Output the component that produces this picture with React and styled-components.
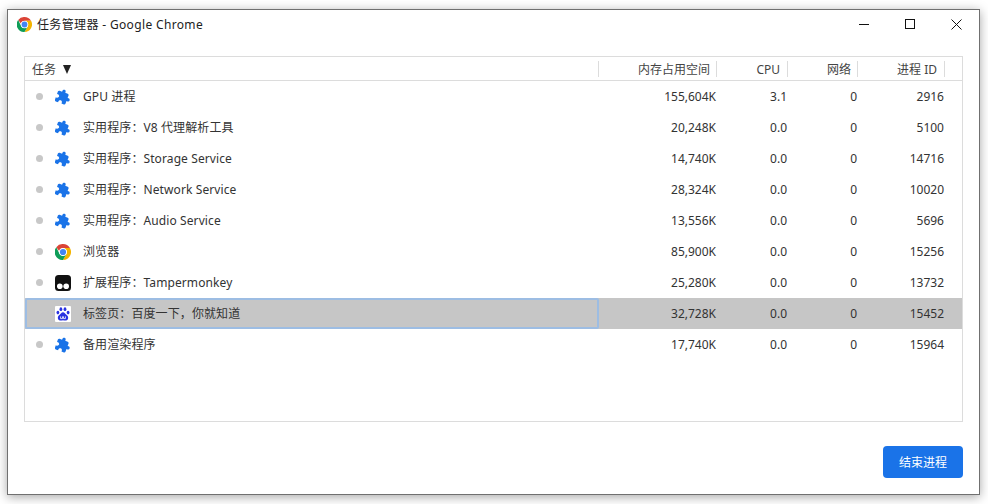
import styled, { createGlobalStyle } from 'styled-components';

const GlobalStyle = createGlobalStyle`
  html, body {
    margin: 0;
    padding: 0;
    background: #fff;
    overflow: hidden;
  }
`;

const Page = styled.div`
  width: 988px;
  height: 504px;
  box-sizing: border-box;
  padding: 9px 8px 9px 7px;
  font-family: "Noto Sans", "Noto Sans CJK SC", sans-serif;
  font-size: 12px;
  color: #333;
`;

const Window = styled.div`
  height: 100%;
  box-sizing: border-box;
  display: flex;
  flex-direction: column;
  background: #fff;
  border: 1px solid #707070;
  box-shadow: 0 2px 10px rgba(0, 0, 0, 0.35);
`;

const TitleBar = styled.div`
  height: 28px;
  display: flex;
  align-items: center;
  padding: 0 0 0 9px;
`;

const TitleText = styled.span`
  margin-left: 5px;
  flex: 1;
  font-size: 12px;
  letter-spacing: 0.35px;
  color: #222;
  white-space: nowrap;
`;

const WinButton = styled.button`
  width: 46px;
  height: 28px;
  padding: 0;
  border: 0;
  background: none;
  display: flex;
  align-items: center;
  justify-content: center;
`;

const TableBox = styled.div`
  margin: 18px 16px 0 16px;
  height: 366px;
  box-sizing: border-box;
  border: 1px solid #dcdcdc;
`;

const HeaderRow = styled.div`
  display: grid;
  grid-template-columns: 574px 118px 71px 70px 87px 18px;
  height: 24px;
  box-sizing: border-box;
  border-bottom: 1px solid #dcdcdc;
  align-items: center;
`;

const HeaderCell = styled.div`
  box-sizing: border-box;
  height: 16px;
  line-height: 16px;
  white-space: nowrap;
  color: #444;
  text-align: ${({ $left }) => ($left ? 'left' : 'right')};
  padding: ${({ $left, $cjk }) => ($left ? '1px 0 0 7px' : $cjk ? '1px 6px 0 0' : '1px 7px 0 0')};
  border-right: 1px solid #dcdcdc;
`;

const SortArrow = styled.span`
  display: inline-block;
  margin-left: 7px;
  width: 0;
  height: 0;
  border-left: 4.5px solid transparent;
  border-right: 4.5px solid transparent;
  border-top: 9px solid #222;
`;

const Row = styled.div`
  display: grid;
  grid-template-columns: 574px 117px 71px 70px 87px 18px;
  height: 31px;
  align-items: center;
  background: ${({ $selected }) => ($selected ? '#c6c6c6' : 'transparent')};
`;

const TaskCell = styled.div`
  height: 31px;
  box-sizing: border-box;
  display: flex;
  align-items: center;
  padding-left: 11px;
  white-space: nowrap;
  border-radius: 2px;
  box-shadow: ${({ $selected }) => ($selected ? 'inset 0 0 0 2px #9dbde3' : 'none')};
`;

const TaskName = styled.span`
  padding-bottom: 2px;
  letter-spacing: 0.1px;
`;

const Dot = styled.span`
  width: 7px;
  height: 7px;
  border-radius: 50%;
  background: ${({ $hidden }) => ($hidden ? 'transparent' : '#c8c8c8')};
  margin-right: 12px;
  flex: none;
`;

const IconSlot = styled.span`
  height: 16px;
  margin-right: ${({ $flush }) => ($flush ? '0' : '12px')};
  flex: none;
  display: flex;
  align-items: center;
`;

const NumCell = styled.div`
  text-align: right;
  white-space: nowrap;
`;

const Footer = styled.div`
  display: flex;
  justify-content: flex-end;
  padding: 24px 16px 0 0;
`;

const EndButton = styled.button`
  width: 80px;
  height: 32px;
  border: 0;
  border-radius: 4px;
  background: #1a73e8;
  color: #fff;
  font: inherit;
  padding: 0;
`;

const PuzzleIcon = () => (
  <svg width="16" height="16" viewBox="0 0 24 24">
    <path
      transform="rotate(20 12 12)"
      fill="#1a73e8"
      d="M20.5 11H19V7c0-1.1-.9-2-2-2h-4V3.5C13 2.12 11.88 1 10.5 1S8 2.12 8 3.5V5H4c-1.1 0-1.99.9-1.99 2v3.8H3.5c1.49 0 2.7 1.21 2.7 2.7s-1.21 2.7-2.7 2.7H2V20c0 1.1.9 2 2 2h3.8v-1.5c0-1.49 1.21-2.7 2.7-2.7 1.49 0 2.7 1.21 2.7 2.7V22H17c1.1 0 2-.9 2-2v-4h1.5c1.38 0 2.5-1.12 2.5-2.5S21.88 11 20.5 11z"
    />
  </svg>
);

const ChromeIcon = ({ size = 16 }) => (
  <svg width={size} height={size} viewBox="0 0 16 16">
    <path fill="#db4437" d="M8 0a8 8 0 0 1 6.93 4H8a4 4 0 0 0-3.86 2.96L1.3 3.2A8 8 0 0 1 8 0z" />
    <path fill="#f4b400" d="M14.93 4A8 8 0 0 1 8 16l3.46-6A4 4 0 0 0 11.46 6 4 4 0 0 0 8 4z" />
    <path fill="#0f9d58" d="M1.3 3.2 4.54 10A4 4 0 0 0 11.46 10L8 16A8 8 0 0 1 1.3 3.2z" />
    <circle cx="8" cy="8" r="3.8" fill="#fff" />
    <circle cx="8" cy="8" r="3.1" fill="#4285f4" />
  </svg>
);

const TamperIcon = () => (
  <svg width="16" height="16" viewBox="0 0 16 16">
    <rect width="16" height="16" rx="3.5" fill="#111" />
    <circle cx="4.8" cy="11.2" r="2.8" fill="#fff" />
    <circle cx="11.2" cy="11.2" r="2.8" fill="#fff" />
  </svg>
);

const BaiduIcon = () => (
  <svg width="16" height="16" viewBox="0 0 16 16">
    <rect width="16" height="16" rx="1" fill="#fff" />
    <g fill="#2932e1">
      <ellipse cx="5.9" cy="3.2" rx="1.4" ry="1.9" />
      <ellipse cx="10" cy="3.2" rx="1.4" ry="1.9" />
      <ellipse cx="2.9" cy="6.6" rx="1.4" ry="1.8" />
      <ellipse cx="13.1" cy="6.6" rx="1.4" ry="1.8" />
      <path d="M8 6.2c1.6 0 2.2 1.5 3.4 2.6 1.2 1 2 2 1.7 3.6-.3 1.6-1.7 2.2-3 2.1-.9 0-1.4-.3-2.1-.3s-1.2.3-2.1.3c-1.3.1-2.7-.5-3-2.1-.3-1.6.5-2.6 1.7-3.6C5.8 7.7 6.4 6.2 8 6.2z" />
    </g>
    <path fill="none" stroke="#fff" strokeWidth=".8" d="M5.6 10.4v2.2h1.9v-2.2M8.5 10.4v2.2h1.9v-2.2" />
  </svg>
);

const rows = [
  { name: 'GPU 进程', mem: '155,604K', cpu: '3.1', net: '0', pid: '2916', icon: <PuzzleIcon /> },
  { name: '实用程序：V8 代理解析工具', mem: '20,248K', cpu: '0.0', net: '0', pid: '5100', icon: <PuzzleIcon /> },
  { name: '实用程序：Storage Service', mem: '14,740K', cpu: '0.0', net: '0', pid: '14716', icon: <PuzzleIcon /> },
  { name: '实用程序：Network Service', mem: '28,324K', cpu: '0.0', net: '0', pid: '10020', icon: <PuzzleIcon /> },
  { name: '实用程序：Audio Service', mem: '13,556K', cpu: '0.0', net: '0', pid: '5696', icon: <PuzzleIcon /> },
  { name: '浏览器', mem: '85,900K', cpu: '0.0', net: '0', pid: '15256', icon: <ChromeIcon /> },
  { name: '扩展程序：Tampermonkey', mem: '25,280K', cpu: '0.0', net: '0', pid: '13732', icon: <TamperIcon /> },
  { name: '标签页：百度一下，你就知道', mem: '32,728K', cpu: '0.0', net: '0', pid: '15452', icon: <BaiduIcon />, selected: true },
  { name: '备用渲染程序', mem: '17,740K', cpu: '0.0', net: '0', pid: '15964', icon: <PuzzleIcon /> },
];

export default function App() {
  return (
    <Page>
      <GlobalStyle />
      <Window>
        <TitleBar>
          <IconSlot $flush>
            <ChromeIcon size={15} />
          </IconSlot>
          <TitleText>任务管理器 - Google Chrome</TitleText>
          <WinButton>
            <svg width="10" height="10" viewBox="0 0 10 10">
              <path d="M0 5.5h10" stroke="#111" fill="none" />
            </svg>
          </WinButton>
          <WinButton>
            <svg width="10" height="10" viewBox="0 0 10 10">
              <rect x=".5" y=".5" width="9" height="9" stroke="#111" fill="none" />
            </svg>
          </WinButton>
          <WinButton>
            <svg width="11" height="11" viewBox="0 0 11 11">
              <path d="M.5.5l10 10M10.5.5l-10 10" stroke="#111" fill="none" />
            </svg>
          </WinButton>
        </TitleBar>
        <TableBox>
          <HeaderRow>
            <HeaderCell $left>
              任务<SortArrow />
            </HeaderCell>
            <HeaderCell $cjk>内存占用空间</HeaderCell>
            <HeaderCell>CPU</HeaderCell>
            <HeaderCell $cjk>网络</HeaderCell>
            <HeaderCell>进程 ID</HeaderCell>
          </HeaderRow>
          {rows.map((r) => (
            <Row key={r.pid} $selected={r.selected}>
              <TaskCell $selected={r.selected}>
                <Dot $hidden={r.selected} />
                <IconSlot>{r.icon}</IconSlot>
                <TaskName>{r.name}</TaskName>
              </TaskCell>
              <NumCell>{r.mem}</NumCell>
              <NumCell>{r.cpu}</NumCell>
              <NumCell>{r.net}</NumCell>
              <NumCell>{r.pid}</NumCell>
            </Row>
          ))}
        </TableBox>
        <Footer>
          <EndButton>结束进程</EndButton>
        </Footer>
      </Window>
    </Page>
  );
}
